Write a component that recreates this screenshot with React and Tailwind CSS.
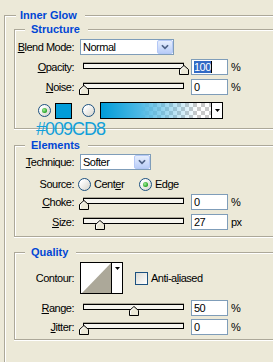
import React from "react";

/**
 * Small XP-style widgets
 */
const Label = ({ children }) => (
  <div className="w-[59px] shrink-0 text-right whitespace-nowrap">{children}</div>
);

const U = ({ children }) => <span className="underline underline-offset-[1px]">{children}</span>;

function Chevron() {
  return (
    <svg width="16" height="14" viewBox="0 0 16 14">
      <path d="M4.5 5 L8 8.5 L11.5 5" fill="none" stroke="#4D6185" strokeWidth="2" />
    </svg>
  );
}

function Select({ value, width }) {
  return (
    <div
      className={`ml-[6px] flex h-[16px] items-center border border-[#7F9DB9] bg-white ${width}`}
    >
      <span className="flex-1 pl-[2px] leading-[14px]">{value}</span>
      <div className="flex h-[14px] w-[16px] items-center justify-center rounded-[2px] border border-[#B4C8F6] bg-[linear-gradient(to_bottom,#E6EEFD,#B9CDF8)]">
        <Chevron />
      </div>
    </div>
  );
}

function Thumb({ at }) {
  return (
    <svg
      width="10"
      height="10"
      viewBox="0 0 10 10"
      className="absolute top-[1px]"
      style={{ left: at - 5 }}
    >
      <polygon points="0.5,9.5 0.5,4.5 5,0.5 9.5,4.5 9.5,9.5" fill="#ECE9D8" stroke="#000" />
      <polyline points="1.5,8.5 1.5,5 5,1.8" fill="none" stroke="#fff" />
    </svg>
  );
}

function Slider({ at }) {
  return (
    <div className="relative ml-[9px] mt-[4px] h-[6px] w-[101px] self-start border border-black bg-[#F6F5EF] shadow-[0_-1px_0_#ACA899]">
      <Thumb at={at} />
    </div>
  );
}

function Field({ children, selected }) {
  return (
    <div className="ml-[7px] flex h-[16px] w-[37px] items-center border border-[#7F9DB9] bg-white pl-[2px] leading-[12px]">
      {selected ? (
        <>
          <span className="bg-[#316AC5] text-white">{children}</span>
          <span className="h-[12px] w-[1px] bg-black" />
        </>
      ) : (
        children
      )}
    </div>
  );
}

function SliderRow({ label, at, value, unit = "%", selected, className = "" }) {
  return (
    <div className={`flex h-[16px] items-center ${className}`}>
      <Label>{label}</Label>
      <Slider at={at} />
      <Field selected={selected}>{value}</Field>
      <span className="ml-[3px]">{unit}</span>
    </div>
  );
}

function Radio({ checked, className = "" }) {
  return (
    <div
      className={`flex h-[13px] w-[13px] shrink-0 items-center justify-center rounded-full border border-[#1C5180] bg-[linear-gradient(135deg,#FFFFFF_20%,#D4D3CA)] ${className}`}
    >
      {checked && (
        <div className="h-[5px] w-[5px] rounded-full bg-[radial-gradient(circle_at_40%_40%,#A4EE9A,#21A121_70%)]" />
      )}
    </div>
  );
}

function Group({ title, className = "", children }) {
  return (
    <div
      className={`relative ml-[9px] w-[290px] border-y border-l border-[#ACA899] shadow-[inset_1px_1px_0_#fff,0_1px_0_#fff] ${className}`}
    >
      <span className="absolute -top-[8px] left-[10px] bg-[#ECE9D8] pl-[6px] pr-[8px] font-bold leading-[14px] tracking-normal text-[#0046D5]">
        {title}
      </span>
      {children}
    </div>
  );
}

export default function App() {
  return (
    <div
      className="h-[362px] w-[273px] overflow-hidden bg-[#ECE9D8] pt-[15px] text-[11px] tracking-[-0.5px] text-black"
      style={{ fontFamily: '"Liberation Sans", Arial, sans-serif' }}
    >
      <div className="relative ml-[4px] h-[400px] w-[300px] border-l border-t border-[#ACA899] shadow-[inset_1px_1px_0_#fff]">
        <span className="absolute -top-[8px] left-[11px] bg-[#ECE9D8] pl-[4px] pr-[8px] font-bold leading-[14px] tracking-normal text-[#0046D5]">
          Inner Glow
        </span>

        {/* Structure */}
        <Group title="Structure" className="mt-[13px] pb-[9px] pt-[9px]">
          <div className="flex h-[16px] items-center">
            <Label>
              <U>B</U>lend Mode:
            </Label>
            <Select value="Normal" width="w-[94px]" />
          </div>
          <SliderRow
            className="mt-[4px]"
            label={<><U>O</U>pacity:</>}
            at={100}
            value="100"
            selected
          />
          <SliderRow className="mt-[4px]" label={<><U>N</U>oise:</>} at={0} value="0" />

          <div className="mt-[7px] flex h-[17px] items-center pl-[23px]">
            <Radio checked />
            <div className="ml-[4px] h-[16px] w-[17px] border border-black bg-[#009CD8]" />
            <Radio className="ml-[10px]" />
            <div className="ml-[5px] flex h-[17px] w-[123px] border border-black bg-white">
              <div className="flex-1 bg-[repeating-conic-gradient(#C9C9C9_0%_25%,#FFFFFF_0%_50%)] bg-[length:8px_8px]">
                <div className="h-full w-full bg-[linear-gradient(to_right,#009CD8_0%,#4DB8E4_35%,rgba(0,156,216,0)_88%)]" />
              </div>
              <div className="flex w-[11px] items-center justify-center border-l border-black">
                <svg width="5" height="3" viewBox="0 0 5 3">
                  <polygon points="0,0 5,0 2.5,3" fill="#000" />
                </svg>
              </div>
            </div>
          </div>

          <span className="absolute left-[21px] top-[90px] text-[18px] leading-[18px] tracking-[-1px] text-[#12A0DA]">
            #009CD8
          </span>
        </Group>

        {/* Elements */}
        <Group title="Elements" className="mt-[16px] pb-[6px] pt-[8px]">
          <div className="flex h-[16px] items-center">
            <Label>
              <U>T</U>echnique:
            </Label>
            <Select value="Softer" width="w-[71px]" />
          </div>
          <div className="mt-[7px] flex h-[14px] items-center">
            <Label>Source:</Label>
            <div className="ml-[4px] flex w-[61px] items-center">
              <Radio />
              <span className="ml-[3px]">
                Cent<U>e</U>r
              </span>
            </div>
            <Radio checked />
            <span className="ml-[3px]">Edge</span>
          </div>
          <SliderRow className="mt-[3px]" label={<><U>C</U>hoke:</>} at={0} value="0" />
          <SliderRow className="mt-[4px]" label={<><U>S</U>ize:</>} at={16} value="27" unit="px" />
        </Group>

        {/* Quality */}
        <Group title="Quality" className="mt-[15px] pb-[4px] pt-[9px]">
          <div className="flex h-[32px] items-center">
            <Label>Contour:</Label>
            <div className="ml-[6px] flex h-[32px] w-[43px] border border-black bg-white">
              <svg width="30" height="30" viewBox="0 0 30 30" className="block">
                <polygon points="1,30 30,0 30,30" fill="#ACA899" />
              </svg>
              <div className="flex w-[11px] justify-center border-l border-black pt-[4px]">
                <svg width="5" height="3" viewBox="0 0 5 3">
                  <polygon points="0,0 5,0 2.5,3" fill="#000" />
                </svg>
              </div>
            </div>
            <div className="ml-[12px] h-[13px] w-[13px] border border-[#1C5180] bg-[linear-gradient(135deg,#DCDBD4,#FFFFFF)]" />
            <span className="ml-[3px]">
              Anti-a<U>l</U>iased
            </span>
          </div>
          <SliderRow className="mt-[6px]" label={<><U>R</U>ange:</>} at={50} value="50" />
          <SliderRow className="mt-[3px]" label={<><U>J</U>itter:</>} at={0} value="0" />
        </Group>
      </div>
    </div>
  );
}
